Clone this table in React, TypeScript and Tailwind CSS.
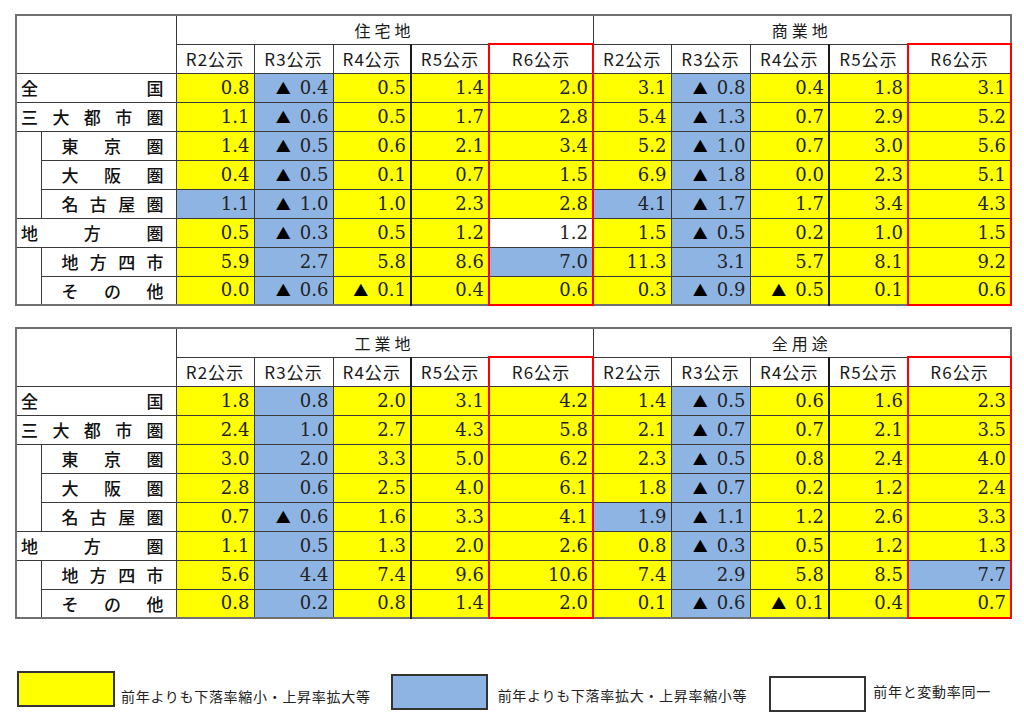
import React from "react";

type Cell = [string, boolean, "Y" | "B" | "W"];

const bgOf: Record<string, string> = {
  Y: "bg-[#ffff00]",
  B: "bg-[#8eb4e3]",
  W: "bg-white",
};

type RowDef = {
  chars: string[];
  indent: boolean;
  blankSpan?: number;
  cells: Cell[];
};

const labels: { chars: string[]; indent: boolean; blankSpan?: number }[] = [
  { chars: ["全", "国"], indent: false },
  { chars: ["三", "大", "都", "市", "圏"], indent: false },
  { chars: ["東", "京", "圏"], indent: true, blankSpan: 3 },
  { chars: ["大", "阪", "圏"], indent: true },
  { chars: ["名", "古", "屋", "圏"], indent: true },
  { chars: ["地", "方", "圏"], indent: false },
  { chars: ["地", "方", "四", "市"], indent: true, blankSpan: 2 },
  { chars: ["そ", "の", "他"], indent: true },
];

const parse = (s: string): Cell[] =>
  s.split(" ").map((t) => {
    const neg = t[1] === "^";
    return [neg ? t.slice(2) : t.slice(1), neg, t[0] as "Y" | "B" | "W"];
  });

const table1: string[] = [
  "Y0.8 B^0.4 Y0.5 Y1.4 Y2.0 Y3.1 B^0.8 Y0.4 Y1.8 Y3.1",
  "Y1.1 B^0.6 Y0.5 Y1.7 Y2.8 Y5.4 B^1.3 Y0.7 Y2.9 Y5.2",
  "Y1.4 B^0.5 Y0.6 Y2.1 Y3.4 Y5.2 B^1.0 Y0.7 Y3.0 Y5.6",
  "Y0.4 B^0.5 Y0.1 Y0.7 Y1.5 Y6.9 B^1.8 Y0.0 Y2.3 Y5.1",
  "B1.1 B^1.0 Y1.0 Y2.3 Y2.8 B4.1 B^1.7 Y1.7 Y3.4 Y4.3",
  "Y0.5 B^0.3 Y0.5 Y1.2 W1.2 Y1.5 B^0.5 Y0.2 Y1.0 Y1.5",
  "Y5.9 B2.7 Y5.8 Y8.6 B7.0 Y11.3 B3.1 Y5.7 Y8.1 Y9.2",
  "Y0.0 B^0.6 Y^0.1 Y0.4 Y0.6 Y0.3 B^0.9 Y^0.5 Y0.1 Y0.6",
];

const table2: string[] = [
  "Y1.8 B0.8 Y2.0 Y3.1 Y4.2 Y1.4 B^0.5 Y0.6 Y1.6 Y2.3",
  "Y2.4 B1.0 Y2.7 Y4.3 Y5.8 Y2.1 B^0.7 Y0.7 Y2.1 Y3.5",
  "Y3.0 B2.0 Y3.3 Y5.0 Y6.2 Y2.3 B^0.5 Y0.8 Y2.4 Y4.0",
  "Y2.8 B0.6 Y2.5 Y4.0 Y6.1 Y1.8 B^0.7 Y0.2 Y1.2 Y2.4",
  "Y0.7 B^0.6 Y1.6 Y3.3 Y4.1 B1.9 B^1.1 Y1.2 Y2.6 Y3.3",
  "Y1.1 B0.5 Y1.3 Y2.0 Y2.6 Y0.8 B^0.3 Y0.5 Y1.2 Y1.3",
  "Y5.6 B4.4 Y7.4 Y9.6 Y10.6 Y7.4 B2.9 Y5.8 Y8.5 B7.7",
  "Y0.8 B0.2 Y0.8 Y1.4 Y2.0 Y0.1 B^0.6 Y^0.1 Y0.4 Y0.7",
];

const colWidths = [25, 135, 78, 79, 78, 78, 104, 78, 79, 79, 79, 103];
const years = ["R2公示", "R3公示", "R4公示", "R5公示", "R6公示"];

const jp = { fontFamily: '"Noto Sans CJK JP", "Noto Sans", sans-serif' };
const num = { fontFamily: '"DejaVu Serif", "Liberation Serif", serif' };

function cellBorder(i: number, isLast: boolean, isHeader: boolean): string {
  const k = i % 5;
  let c = "border border-[#3a3a3a]";
  if (k === 2) c += " border-r-2 border-r-[#1a1a1a]";
  if (k === 3) c += " border-l-2 border-l-[#1a1a1a]";
  if (k === 4) {
    c += " border-x-2 border-x-[#ff0000]";
    if (isHeader) c += " border-t-2 border-t-[#ff0000]";
    if (isLast) c += " border-b-2 border-b-[#ff0000]";
  }
  return c;
}

function DataTable({ titles, data }: { titles: [string, string]; data: string[] }) {
  const rows: RowDef[] = labels.map((l, i) => ({ ...l, cells: parse(data[i]) }));
  return (
    <table className="table-fixed border-collapse border-2 border-[#707070] w-[995px]">
      <colgroup>
        {colWidths.map((w, i) => (
          <col key={i} style={{ width: w }} />
        ))}
      </colgroup>
      <tbody>
        <tr className="h-[29px]">
          <td rowSpan={2} colSpan={2} className="border border-[#3a3a3a] bg-white" />
          {titles.map((t) => (
            <td
              key={t}
              colSpan={5}
              className="border border-[#3a3a3a] text-center text-[16px] tracking-[0.25em] text-[#1a1a1a] leading-none bg-white"
              style={jp}
            >
              {t}
            </td>
          ))}
        </tr>
        <tr className="h-[29px]">
          {[...years, ...years].map((y, i) => (
            <td
              key={i}
              className={`${cellBorder(i, false, true)} text-center text-[17px] tracking-[0.06em] text-[#1a1a1a] leading-none bg-white`}
              style={jp}
            >
              {y}
            </td>
          ))}
        </tr>
        {rows.map((r, ri) => (
          <tr key={ri} className="h-[29px]">
            {r.indent && r.blankSpan ? (
              <td rowSpan={r.blankSpan} className="border border-[#3a3a3a] bg-white" />
            ) : null}
            <td
              colSpan={r.indent ? 1 : 2}
              className={`border border-[#3a3a3a] bg-white ${r.indent ? "pl-[20px]" : "pl-[4px]"} pr-[12px]`}
            >
              <div
                className="flex justify-between text-[17px] font-medium leading-none text-[#111]"
                style={jp}
              >
                {r.chars.map((c, ci) => (
                  <span key={ci}>{c}</span>
                ))}
              </div>
            </td>
            {r.cells.map(([v, neg, col], ci) => (
              <td
                key={ci}
                className={`${cellBorder(ci, ri === rows.length - 1, false)} ${bgOf[col]} text-right pr-[4px] text-[18px] leading-none text-[#222] whitespace-nowrap`}
                style={num}
              >
                {neg ? (
                  <span className="text-[15px] text-black mr-[9px]" style={jp}>
                    ▲
                  </span>
                ) : null}
                {v}
              </td>
            ))}
          </tr>
        ))}
      </tbody>
    </table>
  );
}

export default function App() {
  return (
    <div className="w-[1024px] h-[725px] bg-white pt-[14px] pl-[15px] overflow-hidden">
      <DataTable titles={["住宅地", "商業地"]} data={table1} />
      <div className="h-[21px]" />
      <DataTable titles={["工業地", "全用途"]} data={table2} />
      <div className="flex items-start mt-[52px] ml-[2px] text-[14px] tracking-[0.7px] text-[#222]" style={jp}>
        <div className="flex items-end">
          <div className="w-[98px] h-[36px] bg-[#ffff00] border-2 border-[#333]" />
          <span className="ml-[6px] mb-[4px] leading-none">前年よりも下落率縮小・上昇率拡大等</span>
        </div>
        <div className="flex items-end ml-[20px] mt-[3px]">
          <div className="w-[97px] h-[36px] bg-[#8eb4e3] border-2 border-[#333]" />
          <span className="ml-[10px] mb-[8px] leading-none">前年よりも下落率拡大・上昇率縮小等</span>
        </div>
        <div className="flex items-end ml-[22px] mt-[5px]">
          <div className="w-[97px] h-[36px] bg-white border-2 border-[#333]" />
          <span className="ml-[7px] mb-[14px] leading-none">前年と変動率同一</span>
        </div>
      </div>
    </div>
  );
}
